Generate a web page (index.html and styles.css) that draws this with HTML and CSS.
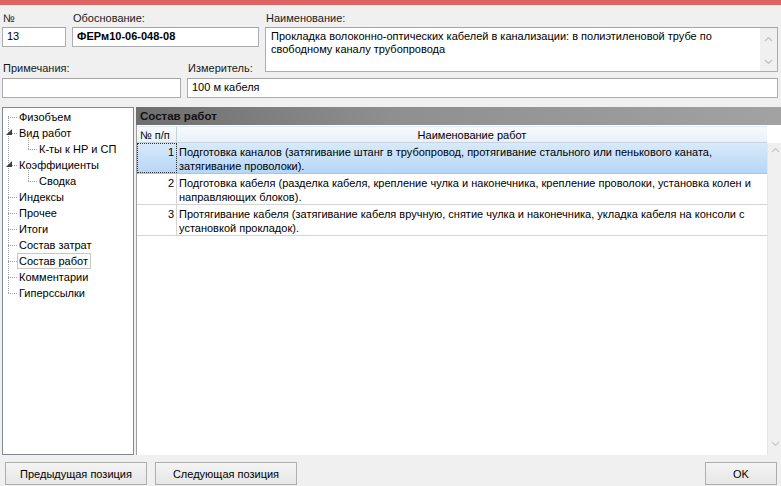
FILE: index.html
```html
<!DOCTYPE html>
<html lang="ru">
<head>
<meta charset="utf-8">
<link rel="stylesheet" href="styles.css">
</head>
<body>
<div class="win">
  <div class="titlebar"></div>
  <div class="form">
    <label class="lbl l-num">№</label>
    <label class="lbl l-osn">Обоснование:</label>
    <label class="lbl l-name">Наименование:</label>
    <div class="inp i-num">13</div>
    <div class="inp i-osn bold">ФЕРм10-06-048-08</div>
    <div class="inp i-name">
      <div class="ta-text">Прокладка волоконно-оптических кабелей в канализации: в полиэтиленовой трубе по свободному каналу трубопровода</div>
      <div class="ta-scroll">
        <svg width="9" height="6" viewBox="0 0 9 6"><path d="M1 5 L4.5 1.5 L8 5" fill="none" stroke="#c0c0c0" stroke-width="1.2"/></svg>
        <svg width="9" height="6" viewBox="0 0 9 6"><path d="M1 1 L4.5 4.5 L8 1" fill="none" stroke="#c0c0c0" stroke-width="1.2"/></svg>
      </div>
    </div>
    <label class="lbl l-note">Примечания:</label>
    <label class="lbl l-unit">Измеритель:</label>
    <div class="inp i-note"></div>
    <div class="inp i-unit">100 м кабеля</div>
  </div>

  <div class="main">
    <div class="tree">
      <div class="vline v0"></div>
      <div class="node"><span class="h"></span><span class="t">Физобъем</span></div>
      <div class="node"><span class="h"></span><span class="tri"></span><span class="t">Вид работ</span></div>
      <div class="node lvl1"><span class="vl1"></span><span class="h"></span><span class="t">К-ты к НР и СП</span></div>
      <div class="node"><span class="h"></span><span class="tri"></span><span class="t">Коэффициенты</span></div>
      <div class="node lvl1"><span class="vl1"></span><span class="h"></span><span class="t">Сводка</span></div>
      <div class="node"><span class="h"></span><span class="t">Индексы</span></div>
      <div class="node"><span class="h"></span><span class="t">Прочее</span></div>
      <div class="node"><span class="h"></span><span class="t">Итоги</span></div>
      <div class="node"><span class="h"></span><span class="t">Состав затрат</span></div>
      <div class="node"><span class="h"></span><span class="t sel">Состав работ</span></div>
      <div class="node"><span class="h"></span><span class="t">Комментарии</span></div>
      <div class="node last"><span class="h"></span><span class="t">Гиперссылки</span></div>
    </div>

    <div class="gridpanel">
      <div class="gtitle">Состав работ</div>
      <div class="gbody">
        <div class="table">
          <div class="thead">
            <div class="c1">№ п/п</div>
            <div class="c2 center">Наименование работ</div>
          </div>
          <div class="row selrow">
            <div class="c1 num focus">1</div>
            <div class="c2">Подготовка каналов (затягивание штанг в трубопровод, протягивание стального или пенькового каната, затягивание проволоки).</div>
          </div>
          <div class="row">
            <div class="c1 num">2</div>
            <div class="c2">Подготовка кабеля (разделка кабеля, крепление чулка и наконечника, крепление проволоки, установка колен и направляющих блоков).</div>
          </div>
          <div class="row">
            <div class="c1 num">3</div>
            <div class="c2">Протягивание кабеля (затягивание кабеля вручную, снятие чулка и наконечника, укладка кабеля на консоли с установкой прокладок).</div>
          </div>
        </div>
        <div class="vscroll">
          <svg width="9" height="6" viewBox="0 0 9 6"><path d="M1 5 L4.5 1.5 L8 5" fill="none" stroke="#c8c8c8" stroke-width="1.2"/></svg>
          <svg width="9" height="6" viewBox="0 0 9 6"><path d="M1 1 L4.5 4.5 L8 1" fill="none" stroke="#c8c8c8" stroke-width="1.2"/></svg>
        </div>
      </div>
    </div>
  </div>

  <div class="buttons">
    <button class="btn b-prev">Предыдущая позиция</button>
    <button class="btn b-next">Следующая позиция</button>
    <div class="spacer"></div>
    <button class="btn b-ok">OK</button>
  </div>
</div>
</body>
</html>
```

FILE: styles.css
```css
* { box-sizing: border-box; }
html, body {
  margin: 0;
  padding: 0;
  background: #f0f0f0;
  font-family: "Liberation Sans", "DejaVu Sans", sans-serif;
  font-size: 11px;
  color: #000;
}
.win {
  width: 781px;
  height: 486px;
  overflow: hidden;
  display: flex;
  flex-direction: column;
}
.titlebar {
  height: 5px;
  background: #de6464;
  flex: none;
}
.form {
  display: grid;
  grid-template-columns: 64px 109px 72px 513px;
  column-gap: 6px;
  grid-template-rows: 22px 20px 15px 16px 20px;
  padding: 0 0 0 2px;
  flex: none;
}
.lbl {
  display: block;
  padding: 7px 0 0 1px;
  line-height: 13px;
  color: #1a1a1a;
}
.l-num { grid-column: 1; grid-row: 1; }
.l-osn { grid-column: 2 / 4; grid-row: 1; }
.l-name { grid-column: 4; grid-row: 1; }
.l-note { grid-column: 1 / 3; grid-row: 4; padding-top: 0; }
.l-unit { grid-column: 3; grid-row: 4; padding-top: 0; white-space: nowrap; }
.inp {
  background: #fff;
  border: 1px solid #abadb3;
  border-top-color: #a5a5a5;
  height: 20px;
  line-height: 17px;
  padding: 0 4px;
  white-space: nowrap;
  overflow: hidden;
}
.bold { font-weight: bold; }
.i-num { grid-column: 1; grid-row: 2; }
.i-osn { grid-column: 2 / 4; grid-row: 2; }
.i-name {
  grid-column: 4;
  grid-row: 2 / 5;
  height: 45px;
  display: flex;
  padding: 0;
  white-space: normal;
}
.ta-text {
  flex: 1;
  padding: 2px 5px;
  line-height: 13px;
}
.ta-scroll {
  width: 17px;
  background: #f0f0f0;
  display: flex;
  flex-direction: column;
  justify-content: space-between;
  align-items: center;
  padding: 8px 0 6px;
}
.ta-scroll svg { display: block; }
.i-note { grid-column: 1 / 3; grid-row: 5; }
.i-unit { grid-column: 3 / 5; grid-row: 5; }

.main {
  margin-top: 9px;
  height: 348px;
  display: flex;
  flex: none;
}
.tree {
  margin-left: 2px;
  width: 132px;
  background: #fff;
  border: 1px solid #828790;
  position: relative;
  padding-top: 1px;
}
.vline.v0 {
  position: absolute;
  left: 5px;
  top: 8px;
  height: 177px;
  border-left: 1px dotted #a0a0a0;
}
.node {
  height: 16px;
  line-height: 16px;
  display: flex;
  align-items: center;
  position: relative;
  padding-left: 5px;
}
.node .h {
  width: 9px;
  border-top: 1px dotted #a0a0a0;
  flex: none;
}
.node.lvl1 { padding-left: 25px; }
.vl1 {
  position: absolute;
  left: 25px;
  top: -6px;
  height: 14px;
  border-left: 1px dotted #a0a0a0;
}
.tri {
  position: absolute;
  left: 3px;
  top: 4px;
  width: 0;
  height: 0;
  border-left: 6px solid transparent;
  border-bottom: 6px solid #404040;
}
.node .t {
  padding: 0 2px 0 1px;
  white-space: nowrap;
  line-height: 14px;
  border: 1px solid transparent;
}
.node .t.sel {
  border: 1px solid #c8c8c8;
  background: #fbfbfb;
}

.gridpanel {
  margin-left: 2px;
  flex: 1;
  display: flex;
  flex-direction: column;
}
.gtitle {
  height: 18px;
  line-height: 18px;
  padding-left: 4px;
  font-weight: bold;
  font-size: 11.5px;
  color: #111;
  background: linear-gradient(to right, #6e6e6e 0%, #8f8f8f 40%, #a2a2a2 100%);
  flex: none;
}
.gbody {
  flex: 1;
  display: flex;
  background: #fff;
  border-left: 1px solid #a0a0a0;
}
.table {
  flex: 1;
  display: flex;
  flex-direction: column;
  margin-top: 1px;
}
.thead, .row {
  display: flex;
}
.thead {
  height: 17px;
  line-height: 16px;
  background: linear-gradient(#f7fafe, #e9f0f8);
  border-bottom: 1px solid #c9d3de;
  border-top: 1px solid #e2e8ef;
}
.thead .c1 {
  padding-left: 3px;
  border-right: 1px solid #c9d3de;
}
.c1 { width: 40px; flex: none; }
.c2 { flex: 1; padding: 0 3px; }
.center { text-align: center; }
.row {
  height: 31px;
  border-bottom: 1px solid #d4d4d4;
  line-height: 14px;
}
.row .c1 {
  border-right: 1px solid #d4d4d4;
  text-align: right;
  padding: 2px 2px 0 0;
}
.row .c2 { padding-top: 2px; padding-left: 2px; }
.selrow {
  background: linear-gradient(#d8eafb, #b6d6f6);
  border-bottom-color: #a8c4e0;
}
.focus {
  outline: 1px dotted #333;
  outline-offset: -1px;
}
.vscroll {
  width: 14px;
  flex: none;
  background: #f0f0f0;
  border-left: 1px solid #e6e6e6;
  display: flex;
  flex-direction: column;
  justify-content: space-between;
  align-items: center;
  padding: 4px 0 8px 2px;
  margin-top: 18px;
}
.vscroll svg { display: block; }

.buttons {
  display: flex;
  margin-top: 7px;
  padding: 0 4px 0 5px;
  gap: 8px;
  height: 23px;
  flex: none;
}
.spacer { flex: 1; }
.btn {
  font-family: inherit;
  font-size: 11px;
  color: #000;
  height: 23px;
  border: 1px solid #adadad;
  border-radius: 0;
  background: linear-gradient(#f4f4f4, #e6e6e6);
  padding: 0;
}
.b-prev, .b-next { width: 142px; }
.b-ok { width: 72px; }
```
